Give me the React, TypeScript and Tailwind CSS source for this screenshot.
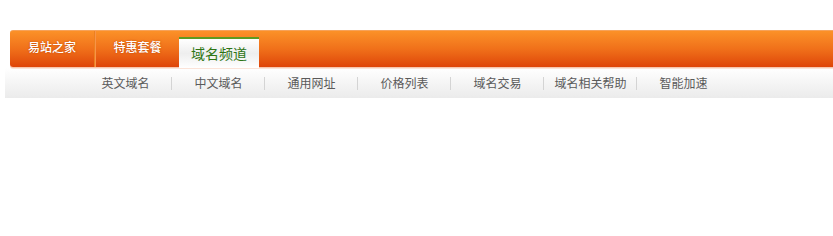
import React from "react";

const sub = ["英文域名", "中文域名", "通用网址", "价格列表", "域名交易", "域名相关帮助", "智能加速"];

export default function App() {
  return (
    <div className="w-[833px] h-[236px] bg-white pt-[30px] overflow-hidden" style={{ fontFamily: '"Noto Sans CJK SC", "Noto Sans", sans-serif' }}>
      <div className="ml-[10px] h-[37px] rounded-l-[3px] border-t border-[#f6a25a] bg-gradient-to-b from-[#fb9128] via-[#f0701a] to-[#de4408] flex shadow-[0_1px_0_#f7c6ae,0_2px_0_#fbe3d8] relative">
        <div className="w-[85px] flex items-center justify-center text-white text-[12px] font-medium pb-[4px] border-r border-[#ec8020] [text-shadow:0_0_2px_#b84000]">易站之家</div>
        <div className="w-[84px] flex items-center justify-center text-white text-[12px] font-medium pb-[4px] border-l border-[#f89448] [text-shadow:0_0_2px_#b84000]">特惠套餐</div>
        <div className="self-end w-[80px] h-[31px] border-t-2 border-[#5d9a20] bg-gradient-to-b from-white via-[#eeeeee] to-white flex items-center justify-center text-[14px] text-[#2d7514] -mb-[1px] z-10">域名频道</div>
      </div>
      <div className="ml-[5px] mt-[1px] h-[30px] bg-gradient-to-b from-white to-[#ebebeb] flex items-center pl-[74px] text-[12px] text-[#5a5a5a]">
        {sub.map((s, i) => (
          <div key={s} className="w-[93px] flex items-center relative">
            <span className="flex-1 text-center">{s}</span>
            {i < sub.length - 1 && <span className="absolute right-0 w-px h-[13px] bg-[#d4d4d4]" />}
          </div>
        ))}
      </div>
    </div>
  );
}
